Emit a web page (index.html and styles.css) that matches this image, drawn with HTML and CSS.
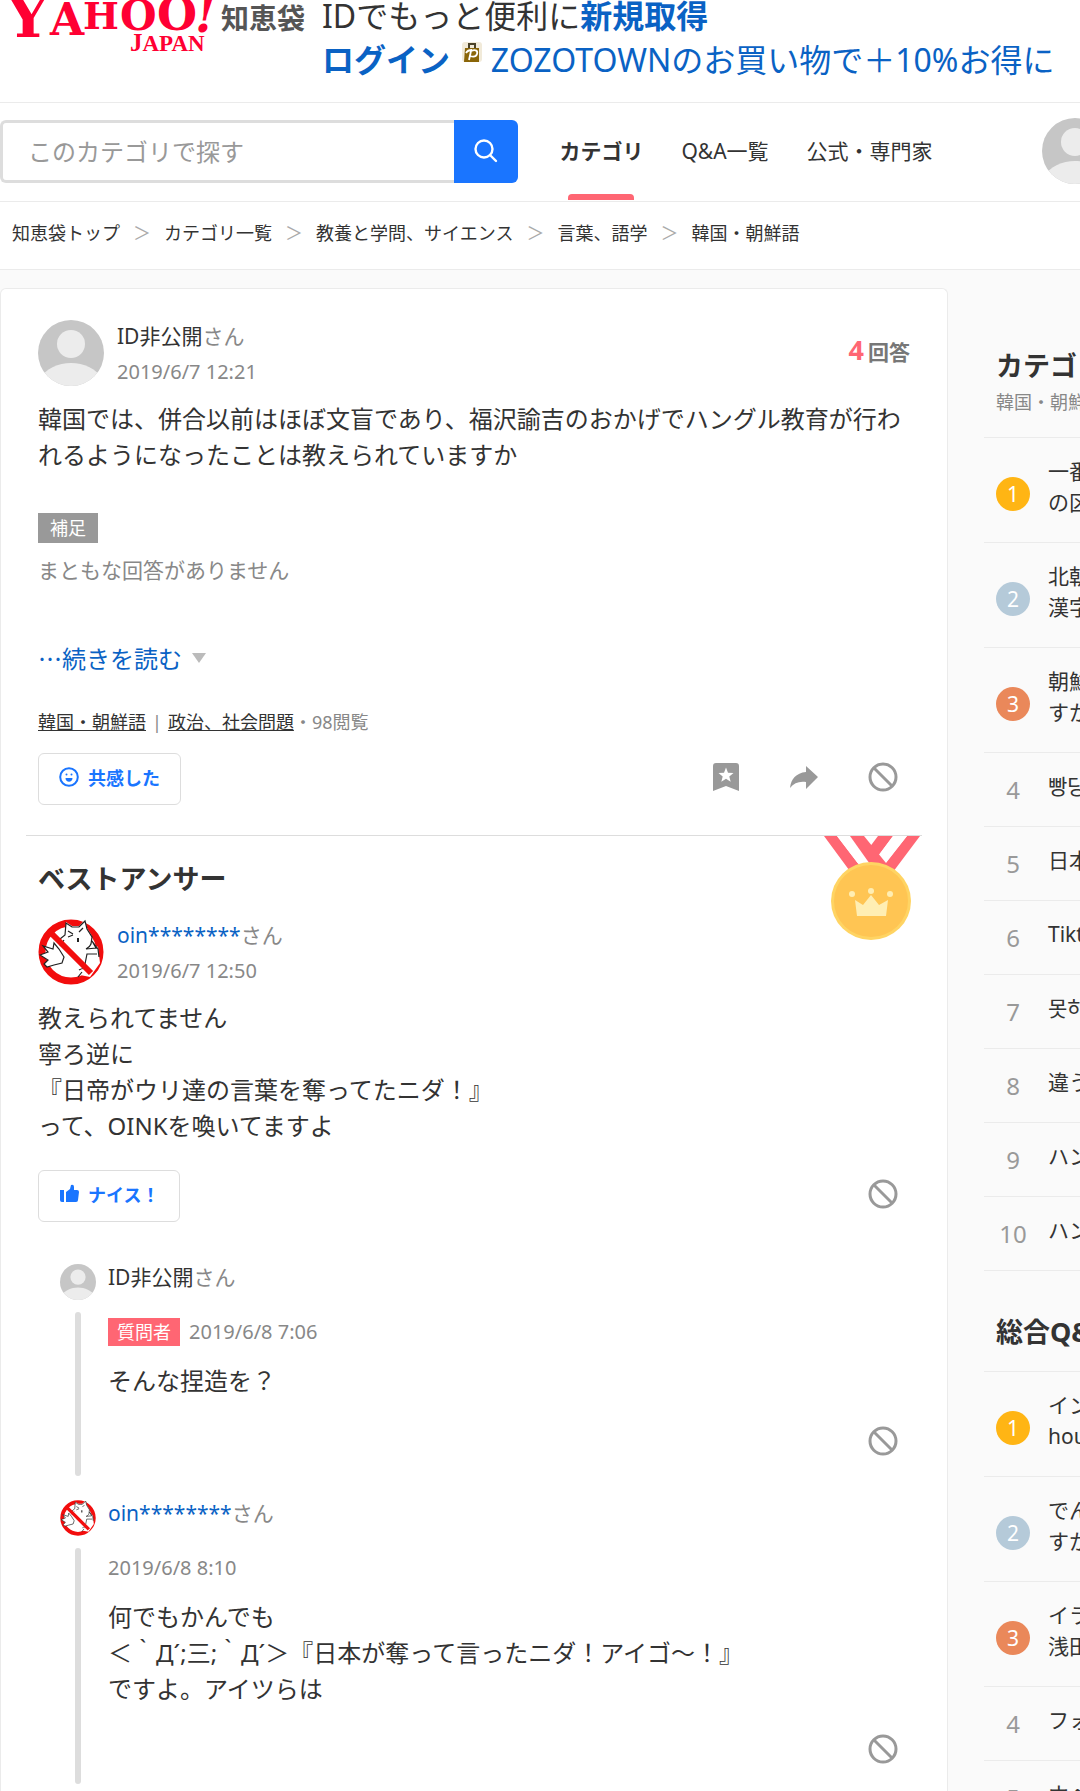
FILE: index.html
```html
<!DOCTYPE html>
<html lang="ja">
<head>
    <meta charset="UTF-8">
    <meta name="viewport" content="width=device-width, initial-scale=1.0">
    <title>韓国では、併合以前はほぼ文盲であり - Yahoo!知恵袋</title>
    <link rel="stylesheet" href="styles.css">
</head>
<body>

    <!-- Shared icons -->
    <svg class="sprite" aria-hidden="true">
        <symbol id="icon-user" viewBox="0 0 66 66">
            <clipPath id="user-clip"><circle cx="33" cy="33" r="33"/></clipPath>
            <g clip-path="url(#user-clip)">
                <rect width="66" height="66" fill="#c6c6c6"/>
                <circle cx="33" cy="24" r="14" fill="#ececec"/>
                <path d="M0 60C9 48 20 43 33 43s24 5 33 17v10H0z" fill="#ececec"/>
            </g>
        </symbol>
        <symbol id="icon-cat" viewBox="0 0 66 66">
            <circle cx="33" cy="33" r="29" fill="#fff" stroke="#f20d0d" stroke-width="7"/>
            <path d="M23 20l4-5 1-12 6 4h7l6-6 2 8 5 8-1 7 7 4 2 16-10 14-20-4-9-12z" fill="#fff"/>
            <path d="M22 20l5-4 1-12 6 4h7l6-6 2 8 5 8-1 7c-1 3-3 4-5 5l10-1-4-7 6 8 1 8M47 45l2-10h10M40 58l4-5M30 12l5 3M30 18l5-2M45 9l-4 4M41 51c3-2 7-2 9 0M26 21l-4 6" fill="none" stroke="#222" stroke-width="1.2"/>
            <path d="M40 19v4" stroke="#222" stroke-width="2"/>
            <path d="M2 36l8-3-5-6 10 3 1-6 5 6 5 8-2 6-8 2-7 2-3-3 4-4z" fill="#fff" stroke="#222" stroke-width="1.2"/>
            <path d="M13 14L53 54" stroke="#f20d0d" stroke-width="6"/>
        </symbol>
        <symbol id="icon-ban" viewBox="0 0 30 30">
            <g fill="none" stroke="#999" stroke-width="3">
                <circle cx="15" cy="15" r="13"/>
                <path d="M6 6l18 18"/>
            </g>
        </symbol>
    </svg>

    <header class="masthead">
        <a href="#" class="logo" aria-label="Yahoo! JAPAN 知恵袋">
            <svg class="logo-mark" width="214" height="54" viewBox="0 0 214 54">
                <g class="logo-text">
                    <text x="7" y="37" font-size="58">Y</text>
                    <text x="50" y="35" font-size="44">A</text>
                    <text x="83" y="29" font-size="38">H</text>
                    <text x="120" y="30" font-size="42">O</text>
                    <text x="157" y="30" font-size="46">O</text>
                    <text x="195" y="32" font-size="48" font-style="italic">!</text>
                    <text class="logo-japan" x="130" y="51" font-size="25">J<tspan font-size="23">APAN</tspan></text>
                </g>
            </svg>
            <span class="logo-service">知恵袋</span>
        </a>
        <p class="promo">
            IDでもっと便利に<a href="#"><b>新規取得</b></a><br>
            <a href="#"><b>ログイン</b></a>
            <svg class="promo-icon" width="20" height="20" viewBox="0 0 20 20">
                <rect width="20" height="20" rx="3" fill="#f1ead9"/>
                <path d="M3 6h14v14H2z" fill="#8a6508"/>
                <path d="M7 6V2h6v4" fill="none" stroke="#4a4228" stroke-width="2"/>
                <path d="M7 18l2-9c5-2 7 0 6 3s-4 3-7 2M4 11c1-2 3-3 6-3" fill="none" stroke="#fff" stroke-width="1.8"/>
            </svg>
            <a href="#">ZOZOTOWNのお買い物で＋10%お得に</a>
        </p>
    </header>

    <div class="toolbar">
        <form class="search" role="search">
            <input type="text" aria-label="検索" placeholder="このカテゴリで探す">
            <button type="button" aria-label="検索する">
                <svg width="24" height="24" viewBox="0 0 24 24" fill="none" stroke="#fff" stroke-width="2.4" stroke-linecap="round">
                    <circle cx="10" cy="10" r="8.5"/>
                    <path d="M16 16l6 6"/>
                </svg>
            </button>
        </form>
        <nav class="nav">
            <a href="#" class="active">カテゴリ</a>
            <a href="#">Q&amp;A一覧</a>
            <a href="#">公式・専門家</a>
        </nav>
        <svg class="avatar my-avatar"><use href="#icon-user"/></svg>
    </div>

    <nav class="breadcrumb" aria-label="パンくず">
        <a href="#">知恵袋トップ</a><span>＞</span>
        <a href="#">カテゴリ一覧</a><span>＞</span>
        <a href="#">教養と学問、サイエンス</a><span>＞</span>
        <a href="#">言葉、語学</a><span>＞</span>
        <a href="#">韓国・朝鮮語</a>
    </nav>

    <div class="page">
        <main class="card">
            <section class="question">
                <div class="user">
                    <svg class="avatar"><use href="#icon-user"/></svg>
                    <div>
                        <p class="name">ID非公開<span>さん</span></p>
                        <p class="date">2019/6/7 12:21</p>
                    </div>
                    <p class="count"><strong>4</strong>回答</p>
                </div>
                <h1 class="text">韓国では、併合以前はほぼ文盲であり、福沢諭吉のおかげでハングル教育が行われるようになったことは教えられていますか</h1>
                <span class="label">補足</span>
                <p class="supplement">まともな回答がありません</p>
                <a href="#" class="more">…続きを読む</a>
                <p class="category"><a href="#">韓国・朝鮮語</a><i>|</i><a href="#">政治、社会問題</a>・98閲覧</p>
                <div class="actions">
                    <button type="button" class="btn">
                        <svg width="20" height="20" viewBox="0 0 20 20">
                            <circle cx="10" cy="10" r="8.8" fill="none" stroke="#1a75ff" stroke-width="2"/>
                            <path d="M6.500 11h7c0 5-7 5-7 0z" fill="#1a75ff"/>
                            <circle cx="7.500" cy="7.500" r="1" fill="#1a75ff"/>
                            <circle cx="12.500" cy="7.500" r="1" fill="#1a75ff"/>
                        </svg>
                        共感した
                    </button>
                    <div class="tools">
                        <button type="button" aria-label="知恵コレクション">
                            <svg width="28" height="30" viewBox="0 0 28 30">
                                <path d="M4 1h20q3 0 3 3v25l-13-5-13 5V4q0-3 3-3z" fill="#999"/>
                                <path d="M14 5.500l2 5.200 5.500.3-4.200 3.500 1.400 5.300-4.700-3-4.700 3 1.400-5.300L6.500 11l5.500-.3z" fill="#fff"/>
                            </svg>
                        </button>
                        <button type="button" aria-label="共有">
                            <svg width="28" height="30" viewBox="0 0 28 30">
                                <path d="M16 4l12 11-12 12v-7C9 19 4 21 0 26 1 17 6 11 16 10z" fill="#999"/>
                            </svg>
                        </button>
                        <button type="button" aria-label="違反報告"><svg width="30" height="30"><use href="#icon-ban"/></svg></button>
                    </div>
                </div>
            </section>

            <section class="answer">
                <svg class="medal" width="96" height="104" viewBox="0 0 96 104">
                    <path d="M0 0h13l29 38H28zM54 0h15L38 42 27 36zM83 0h13L66 40H51z" fill="#ff6673"/>
                    <path d="M13 0h13l30 38H42zM69 0h14L55 36 48 28z" fill="#fff"/>
                    <path d="M26 0h14l31 38H53z" fill="#ff6673"/>
                    <ellipse cx="47" cy="65" rx="40" ry="39" fill="#ffd463"/>
                    <ellipse cx="47" cy="65" rx="37" ry="36" fill="#ffc553"/>
                    <path d="M31 64l8 5 8-10 8 10 9-5-2 16H33z" fill="#ffeeb3"/>
                    <g fill="#ffeeb3"><circle cx="28" cy="58" r="3"/><circle cx="47" cy="55" r="3"/><circle cx="66" cy="58" r="3"/></g>
                </svg>
                <h2>ベストアンサー</h2>
                <div class="user">
                    <svg class="avatar"><use href="#icon-cat"/></svg>
                    <div>
                        <p class="name"><a href="#">oin********</a><span>さん</span></p>
                        <p class="date">2019/6/7 12:50</p>
                    </div>
                </div>
                <p class="text">教えられてません<br>寧ろ逆に<br>『日帝がウリ達の言葉を奪ってたニダ！』<br>って、OINKを喚いてますよ</p>
                <div class="actions">
                    <button type="button" class="btn">
                        <svg width="20" height="20" viewBox="0 0 20 20" fill="#1a75ff">
                            <path d="M1 6h4v12H3q-2 0-2-2zM7 8l4-3 1-4q3-1 3 2v3h3q2 0 2 2l-1 8q0 2-2 2H7z"/>
                        </svg>
                        ナイス！
                    </button>
                    <div class="tools">
                        <button type="button" aria-label="違反報告"><svg width="30" height="30"><use href="#icon-ban"/></svg></button>
                    </div>
                </div>

                <ul class="replies">
                    <li class="reply">
                        <svg class="avatar"><use href="#icon-user"/></svg>
                        <div class="reply-body">
                            <p class="name">ID非公開<span>さん</span></p>
                            <p class="date"><span class="asker">質問者</span>2019/6/8 7:06</p>
                            <p class="text">そんな捏造を？</p>
                            <div class="tools">
                                <button type="button" aria-label="違反報告"><svg width="30" height="30"><use href="#icon-ban"/></svg></button>
                            </div>
                        </div>
                    </li>
                    <li class="reply">
                        <svg class="avatar"><use href="#icon-cat"/></svg>
                        <div class="reply-body">
                            <p class="name"><a href="#">oin********</a><span>さん</span></p>
                            <p class="date">2019/6/8 8:10</p>
                            <p class="text">何でもかんでも<br>＜｀Д´;三;｀Д´＞『日本が奪って言ったニダ！アイゴ～！』<br>ですよ。アイツらは</p>
                            <div class="tools">
                                <button type="button" aria-label="違反報告"><svg width="30" height="30"><use href="#icon-ban"/></svg></button>
                            </div>
                        </div>
                    </li>
                </ul>
            </section>
        </main>

        <aside class="sidebar">
            <section>
                <div class="rank-head">
                    <h2>カテゴリ</h2>
                    <p>韓国・朝鮮語</p>
                </div>
                <ol class="rank">
                    <li><a href="#">一番<br>の区</a></li>
                    <li><a href="#">北朝<br>漢字</a></li>
                    <li><a href="#">朝鮮<br>すか</a></li>
                    <li><a href="#" lang="ko">빵당</a></li>
                    <li><a href="#">日本</a></li>
                    <li><a href="#">Tikt</a></li>
                    <li><a href="#" lang="ko">못하</a></li>
                    <li><a href="#">違う</a></li>
                    <li><a href="#">ハン</a></li>
                    <li><a href="#">ハン</a></li>
                </ol>
            </section>
            <section>
                <div class="rank-head">
                    <h2>総合Q&amp;A</h2>
                </div>
                <ol class="rank">
                    <li><a href="#">イン<br>hou</a></li>
                    <li><a href="#">でん<br>すか</a></li>
                    <li><a href="#">イラ<br>浅田</a></li>
                    <li><a href="#">フォ</a></li>
                    <li><a href="#">ホペ</a></li>
                </ol>
            </section>
        </aside>
    </div>

</body>
</html>
```

FILE: styles.css
```css
:root {
    --text: #333;
    --muted: #888;
    --link: #0a62c4;
    --blue: #1a75ff;
    --pink: #ff6673;
    --line: #ebebeb;
    --bg: #fafafa;
}

* {
    box-sizing: border-box;
    margin: 0;
    padding: 0;
}

body {
    height: 100vh;
    display: flex;
    flex-direction: column;
    overflow: hidden;
    font-family: "Noto Sans", "Noto Sans CJK JP", sans-serif;
    font-size: 18px;
    font-weight: 390;
    color: var(--text);
    background: #fff;
}

a {
    color: var(--link);
    text-decoration: none;
}

b, strong {
    font-weight: 700;
}

button {
    font: inherit;
    border: none;
    background: none;
    cursor: pointer;
}

ul, ol {
    list-style: none;
}

svg {
    display: block;
    flex: none;
}

.sprite {
    position: absolute;
    width: 0;
    height: 0;
}

/* Masthead */
.masthead {
    display: flex;
    height: 103px;
    flex: none;
    border-bottom: 1px solid var(--line);
}

.logo {
    display: flex;
    gap: 7px;
    width: 322px;
    flex: none;
}

.logo-text {
    font-family: "DejaVu Serif", serif;
    font-weight: 700;
    fill: #ff0033;
}

.logo-japan {
    font-family: "Liberation Serif", serif;
}

.logo-service {
    font-size: 28px;
    font-weight: 700;
    line-height: 36px;
    color: #555;
}

.promo {
    margin-top: -6px;
    font-size: 32px;
    line-height: 44px;
    white-space: nowrap;
}

.promo-icon {
    display: inline-block;
    margin: 0 0 0 4px;
    vertical-align: 10px;
}

/* Search and navigation */
.toolbar {
    display: flex;
    align-items: center;
    height: 99px;
    flex: none;
    padding-bottom: 2px;
    overflow: hidden;
    border-bottom: 1px solid var(--line);
}

.search {
    display: flex;
    width: 48%;
    height: 63px;
}

.search input {
    flex: 1;
    min-width: 0;
    padding: 0 25px;
    font: inherit;
    font-size: 24px;
    border: 3px solid #ddd;
    border-right: none;
    border-radius: 6px 0 0 6px;
    outline: none;
}

.search input::placeholder {
    color: #999;
}

.search button {
    display: flex;
    align-items: center;
    justify-content: center;
    width: 64px;
    background: var(--blue);
    border-radius: 0 6px 6px 0;
}

.nav {
    display: flex;
    flex: 1;
    gap: 38px;
    margin-left: 41px;
    font-size: 21px;
    line-height: 96px;
    white-space: nowrap;
}

.nav a {
    color: var(--text);
}

.nav .active {
    position: relative;
    font-weight: 700;
}

.nav .active::after {
    content: "";
    position: absolute;
    left: 9px;
    right: 9px;
    bottom: -1px;
    height: 6px;
    background: var(--pink);
    border-radius: 4px 4px 0 0;
}

.avatar {
    width: 66px;
    height: 66px;
}

.my-avatar {
    margin-right: -28px;
}

.breadcrumb {
    display: flex;
    height: 68px;
    flex: none;
    padding-left: 12px;
    line-height: 62px;
    white-space: nowrap;
    border-bottom: 1px solid var(--line);
}

.breadcrumb a {
    color: var(--text);
}

.breadcrumb span {
    margin: 0 13px;
    color: #aaa;
}

/* Columns */
.page {
    display: flex;
    gap: 36px;
    flex: 1;
    min-height: 0;
    background: var(--bg);
}

.card {
    flex: 1;
    margin-top: 18px;
    padding: 29px 25px 0;
    background: #fff;
    border: 1px solid var(--line);
    border-bottom: none;
    border-radius: 6px 6px 0 0;
}

.question,
.answer {
    padding: 0 12px;
}

/* User line */
.user {
    display: flex;
    gap: 13px;
}

.user .avatar {
    margin-top: 2px;
}

.user .name,
.user .date {
    line-height: 36px;
}

.name {
    font-size: 21px;
}

.name span {
    color: var(--muted);
}

.date {
    font-size: 20px;
    color: var(--muted);
}

.count {
    margin-left: auto;
    font-size: 21px;
    font-weight: 700;
    line-height: 64px;
    color: #777;
}

.count strong {
    margin-right: 4px;
    font-size: 27px;
    color: var(--pink);
}

.text {
    margin-top: 11px;
    font-size: 24px;
    font-weight: inherit;
    line-height: 36px;
}

.label {
    display: inline-block;
    margin-top: 40px;
    padding: 0 12px;
    line-height: 30px;
    color: #fff;
    background: #999;
}

.supplement {
    margin-top: 11px;
    font-size: 21px;
    line-height: 32px;
    color: var(--muted);
}

.more {
    display: flex;
    align-items: center;
    gap: 10px;
    margin-top: 54px;
    font-family: "Noto Sans CJK JP", sans-serif;
    font-size: 24px;
    line-height: 36px;
}

.more::after {
    content: "";
    border: 7px solid transparent;
    border-top: 10px solid #bbb;
    border-bottom: none;
}

.category {
    margin-top: 32px;
    line-height: 28px;
    color: var(--muted);
}

.category a {
    color: var(--text);
    text-decoration: underline;
}

.category i {
    margin: 0 6px;
    font-style: normal;
}

/* Buttons */
.actions {
    display: flex;
    align-items: center;
    justify-content: space-between;
    margin-top: 17px;
}

.btn {
    display: flex;
    align-items: center;
    gap: 9px;
    height: 52px;
    padding: 0 20px 4px;
    font-weight: 700;
    color: var(--blue);
    border: 1px solid #ddd;
    border-radius: 6px;
}

.tools {
    display: flex;
    justify-content: flex-end;
    gap: 50px;
    padding: 0 12px 4px 0;
}

/* Best answer */
.answer {
    position: relative;
    margin-top: 30px;
    border-top: 1px solid #ddd;
}

.answer h2 {
    margin: 23px 0 18px;
    font-size: 27px;
    line-height: 40px;
}

.answer .actions {
    margin-top: 26px;
}

.medal {
    position: absolute;
    top: 0;
    right: 2px;
}

.replies {
    margin-top: 42px;
    padding-left: 22px;
}

.reply {
    position: relative;
    display: flex;
    gap: 12px;
    margin-bottom: 24px;
}

.reply::before {
    content: "";
    position: absolute;
    left: 15px;
    top: 48px;
    bottom: 0;
    width: 6px;
    background: #ddd;
    border-radius: 3px;
}

.reply .avatar {
    width: 36px;
    height: 36px;
}

.reply-body {
    flex: 1;
    padding-bottom: 16px;
}

.reply .name {
    line-height: 26px;
}

.reply .date {
    display: flex;
    margin-top: 28px;
    line-height: 28px;
}

.asker {
    margin-right: 9px;
    padding: 0 9px;
    font-size: 18px;
    color: #fff;
    background: var(--pink);
}

.reply .text {
    margin-top: 17px;
}

.reply .tools {
    margin-top: 27px;
}

/* Ranking */
.sidebar {
    flex: 0 0 96px;
    overflow: hidden;
    padding-top: 78px;
    white-space: nowrap;
}

.sidebar section + section {
    margin-top: 43px;
}

.rank-head {
    padding: 0 0 21px 12px;
    border-bottom: 1px solid var(--line);
}

.rank-head h2 {
    font-size: 27px;
    line-height: 36px;
}

.rank-head p {
    margin-top: 4px;
    line-height: 28px;
    color: var(--muted);
}

.rank {
    counter-reset: rank;
}

.rank li {
    counter-increment: rank;
    display: flex;
    align-items: center;
    gap: 18px;
    padding: 18px 0 24px 12px;
    font-size: 21px;
    line-height: 31px;
    border-bottom: 1px solid var(--line);
}

.rank li::before {
    content: counter(rank);
    flex: none;
    width: 34px;
    margin: 6px 0 -1px;
    font-size: 24px;
    line-height: 24px;
    text-align: center;
    color: #999;
}

.rank li:nth-child(-n+3)::before {
    margin-top: 12px;
    font-size: 21px;
    line-height: 34px;
    color: #fff;
    border-radius: 50%;
}

.rank li:nth-child(1)::before {
    background: #ffb514;
}

.rank li:nth-child(2)::before {
    background: #b5cad9;
}

.rank li:nth-child(3)::before {
    background: #ea885a;
}

.rank a {
    color: var(--text);
}

[lang="ko"] {
    font-family: "Noto Sans", "Noto Sans CJK KR", sans-serif;
}
```
